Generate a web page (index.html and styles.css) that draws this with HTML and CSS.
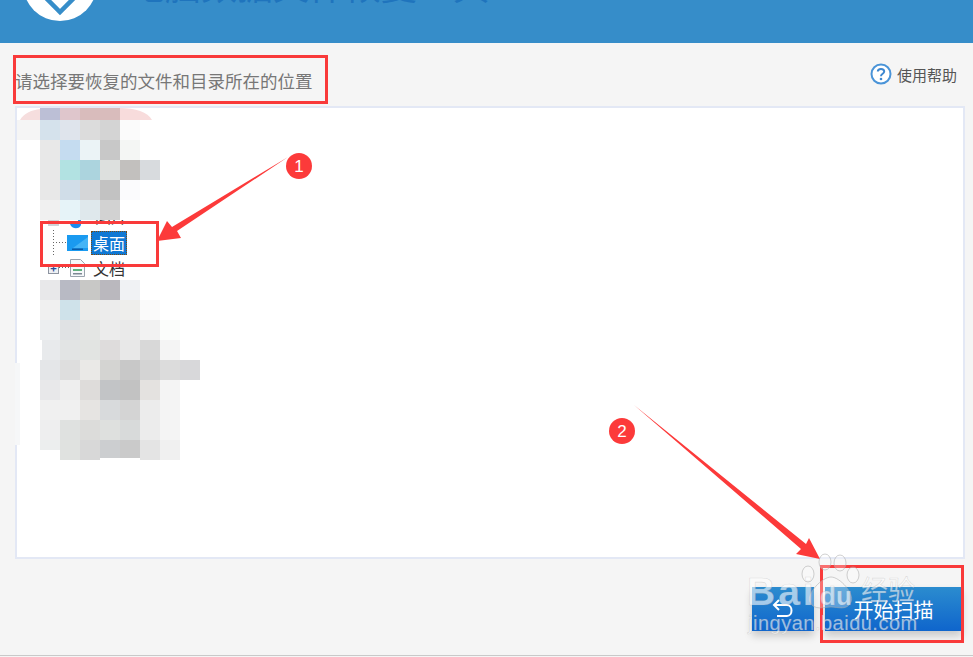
FILE: index.html

```html
<!DOCTYPE html>
<html lang="zh-CN">
<head>
  <meta charset="UTF-8" />
  <meta name="viewport" content="width=device-width, initial-scale=1.0"/>
  <title>文件恢复工具</title>
  <link rel="stylesheet" href="styles.css">
</head>
<body>

  <div class="page">
    <header class="header">
      <div class="logo">
        <svg width="74" height="74" viewBox="0 0 74 74">
          <circle cx="37" cy="37" r="37" fill="#fff"/>
          <path d="M22 50 L37 65 L52 50" fill="none" stroke="#368dc9" stroke-width="4.5"/>
        </svg>
      </div>
      <div class="title">电脑数据文件恢复工具</div>
    </header>

    <div class="top-row">
      <div class="hint">请选择要恢复的文件和目录所在的位置</div>
      <div class="help">
        <svg width="22" height="22" viewBox="0 0 22 22">
          <circle cx="11" cy="11" r="9.5" fill="#fff" stroke="#4a94d8" stroke-width="2"/>
          <path d="M7.8 8.6 C7.8 5.2 14.2 5.2 14.2 8.6 C14.2 10.8 11 10.8 11 13.2" fill="none" stroke="#3d87d0" stroke-width="2"/>
          <circle cx="11" cy="16" r="1.3" fill="#3d87d0"/>
        </svg>
        <span>使用帮助</span>
      </div>
    </div>

    <div class="panel">
      <svg class="mosaic" width="150" height="112" viewBox="17 108 150 112">
        <path d="M20 120 C24 113 32 110 40 109 V120 Z" fill="#f6dede"/>
        <rect x="40" y="108" width="20" height="12" fill="#bcbfd6"/>
        <rect x="60" y="108" width="20" height="12" fill="#dfc6cc"/>
        <rect x="80" y="108" width="40" height="12" fill="#d9bcbc"/>
        <path d="M120 108 C135 108 148 112 152 120 H120 Z" fill="#f8dcdc"/>
        <rect x="17" y="120" width="23" height="20" fill="#f5f5f5"/>
        <rect x="40" y="120" width="20" height="20" fill="#d5e2ec"/>
        <rect x="60" y="120" width="20" height="20" fill="#dfe4ec"/>
        <rect x="80" y="120" width="20" height="20" fill="#dcdcdc"/>
        <rect x="100" y="120" width="20" height="20" fill="#d4d4d4"/>
        <rect x="120" y="120" width="20" height="20" fill="#fbfbfb"/>
        <rect x="40" y="140" width="20" height="20" fill="#e8e8e8"/>
        <rect x="60" y="140" width="20" height="20" fill="#c5dcf0"/>
        <rect x="80" y="140" width="20" height="20" fill="#ebf3f6"/>
        <rect x="100" y="140" width="20" height="20" fill="#c8c8c8"/>
        <rect x="120" y="140" width="20" height="20" fill="#f4f6f4"/>
        <rect x="40" y="160" width="20" height="20" fill="#e8e8e8"/>
        <rect x="60" y="160" width="20" height="20" fill="#b2e2e2"/>
        <rect x="80" y="160" width="20" height="20" fill="#acd4de"/>
        <rect x="100" y="160" width="20" height="20" fill="#dde0de"/>
        <rect x="120" y="160" width="20" height="20" fill="#c2c0be"/>
        <rect x="140" y="160" width="20" height="20" fill="#d8dbde"/>
        <rect x="40" y="180" width="20" height="20" fill="#e8e8e8"/>
        <rect x="60" y="180" width="20" height="20" fill="#d0dde8"/>
        <rect x="80" y="180" width="20" height="20" fill="#d4d6d8"/>
        <rect x="100" y="180" width="20" height="20" fill="#c2c2c2"/>
        <rect x="120" y="180" width="20" height="20" fill="#fbfbfd"/>
        <rect x="40" y="200" width="20" height="20" fill="#f0f0f0"/>
        <rect x="60" y="200" width="20" height="20" fill="#e6f3f8"/>
        <rect x="80" y="200" width="20" height="20" fill="#dfe8ec"/>
        <rect x="100" y="200" width="20" height="20" fill="#d2d2d2"/>
      </svg>

      <div class="tree-row tree-row-cut">
        <span class="node-box"></span>
        <svg class="cut-icon" width="14" height="9" viewBox="0 0 14 9">
          <path d="M1 4 C2 1 5 2 6 3 L9 2 L9 0 L12 0 L12 5 C11 9 3 10 1 4 Z" fill="#1d8cf0"/>
        </svg>
        <span class="tree-label">图片</span>
      </div>
      <div class="tree-row tree-row-on">
        <span class="twig"></span>
        <svg class="monitor" width="21" height="16" viewBox="0 0 21 16">
          <rect width="21" height="16" fill="#1a9af0"/>
          <path d="M21 2 L21 13 L6 13 Z" fill="#45b4f6"/>
          <rect x="5" y="13.5" width="11" height="1.5" fill="#0b5aa8"/>
        </svg>
        <span class="tree-label selected">桌面</span>
      </div>
      <div class="tree-row tree-row-doc">
        <span class="plus-box">+</span>
        <span class="dots"></span>
        <svg class="doc" width="15" height="18" viewBox="0 0 15 18">
          <path d="M.5 .5 H10.5 L14.5 4.5 V17.5 H.5 Z" fill="#f6f8fa" stroke="#9aa3ad"/>
          <rect x="3" y="6" width="9" height="2" fill="#52a0d8"/>
          <rect x="3" y="10" width="9" height="2" fill="#5fb07c"/>
          <rect x="3" y="14" width="9" height="1.5" fill="#7d8894"/>
        </svg>
        <span class="tree-label">文档</span>
      </div>

      <svg class="mosaic" width="190" height="180" viewBox="17 280 190 180">
        <rect x="40" y="280" width="20" height="20" fill="#e8e8ea"/>
        <rect x="60" y="280" width="20" height="20" fill="#b8bac4"/>
        <rect x="80" y="280" width="20" height="20" fill="#c8c8c6"/>
        <rect x="100" y="280" width="20" height="20" fill="#bab8be"/>
        <rect x="120" y="280" width="20" height="20" fill="#f0f2f4"/>
        <rect x="40" y="300" width="20" height="20" fill="#f0f0f0"/>
        <rect x="60" y="300" width="20" height="20" fill="#cfe2ea"/>
        <rect x="80" y="300" width="20" height="20" fill="#ebebe9"/>
        <rect x="100" y="300" width="20" height="20" fill="#ececec"/>
        <rect x="120" y="300" width="20" height="20" fill="#eeeeec"/>
        <rect x="140" y="300" width="20" height="20" fill="#fafafa"/>
        <rect x="40" y="320" width="20" height="20" fill="#eceef0"/>
        <rect x="60" y="320" width="20" height="20" fill="#e0e2e4"/>
        <rect x="80" y="320" width="20" height="20" fill="#e4e6e4"/>
        <rect x="100" y="320" width="20" height="20" fill="#ececec"/>
        <rect x="120" y="320" width="20" height="20" fill="#eaeaea"/>
        <rect x="140" y="320" width="20" height="20" fill="#f2f2f2"/>
        <rect x="160" y="320" width="20" height="20" fill="#fbfdfb"/>
        <rect x="42" y="340" width="18" height="20" fill="#e8eaec"/>
        <rect x="60" y="340" width="20" height="20" fill="#e2e4e4"/>
        <rect x="80" y="340" width="20" height="20" fill="#e2e4e2"/>
        <rect x="100" y="340" width="20" height="20" fill="#dedcdc"/>
        <rect x="120" y="340" width="20" height="20" fill="#e8e8e8"/>
        <rect x="140" y="340" width="20" height="20" fill="#d8d8d8"/>
        <rect x="160" y="340" width="20" height="20" fill="#f4f4f4"/>
        <rect x="40" y="360" width="20" height="20" fill="#e4e6e8"/>
        <rect x="60" y="360" width="20" height="20" fill="#dedede"/>
        <rect x="80" y="360" width="20" height="20" fill="#eae9e7"/>
        <rect x="100" y="360" width="20" height="20" fill="#d4d4d2"/>
        <rect x="120" y="360" width="20" height="20" fill="#c8c8c8"/>
        <rect x="140" y="360" width="20" height="20" fill="#d4d4d4"/>
        <rect x="160" y="360" width="20" height="20" fill="#dcdcdc"/>
        <rect x="180" y="360" width="20" height="20" fill="#d8d8da"/>
        <rect x="40" y="380" width="20" height="20" fill="#e8e8ea"/>
        <rect x="60" y="380" width="20" height="20" fill="#eeeeee"/>
        <rect x="80" y="380" width="20" height="20" fill="#dedcda"/>
        <rect x="100" y="380" width="20" height="20" fill="#c2c4c6"/>
        <rect x="120" y="380" width="20" height="20" fill="#c2c2c2"/>
        <rect x="140" y="380" width="20" height="20" fill="#e4e2e0"/>
        <rect x="160" y="380" width="20" height="20" fill="#f4f4f4"/>
        <rect x="40" y="400" width="20" height="20" fill="#f0f0f0"/>
        <rect x="60" y="400" width="20" height="20" fill="#f0f0f0"/>
        <rect x="80" y="400" width="20" height="20" fill="#e6e4e2"/>
        <rect x="100" y="400" width="20" height="20" fill="#d8dadc"/>
        <rect x="120" y="400" width="20" height="20" fill="#d4d4d4"/>
        <rect x="140" y="400" width="20" height="20" fill="#ececec"/>
        <rect x="160" y="400" width="20" height="20" fill="#f4f4f4"/>
        <rect x="40" y="420" width="20" height="20" fill="#eeeeef"/>
        <rect x="60" y="420" width="20" height="20" fill="#dfe1e0"/>
        <rect x="80" y="420" width="20" height="20" fill="#dcdcda"/>
        <rect x="100" y="420" width="20" height="20" fill="#dee0de"/>
        <rect x="120" y="420" width="20" height="20" fill="#d8dada"/>
        <rect x="140" y="420" width="20" height="20" fill="#ececec"/>
        <rect x="160" y="420" width="20" height="20" fill="#f4f4f4"/>
        <rect x="40" y="440" width="20" height="10" fill="#eceeee"/>
        <rect x="60" y="440" width="20" height="20" fill="#e0e2e0"/>
        <rect x="80" y="440" width="20" height="20" fill="#d8d8d8"/>
        <rect x="100" y="440" width="20" height="18" fill="#ccced0"/>
        <rect x="120" y="440" width="20" height="18" fill="#cacaca"/>
        <rect x="140" y="440" width="20" height="20" fill="#e4e4e4"/>
        <rect x="160" y="440" width="20" height="20" fill="#f0f0f0"/>
      </svg>
    </div>

    <div class="actions">
      <button class="btn btn-back">
        <svg width="24" height="22" viewBox="0 0 24 22">
          <path d="M8 2 L3 7 L8 12 M3 7 H16 C22 7 22 18 16 18 H6" fill="none" stroke="#fff" stroke-width="2"/>
        </svg>
      </button>
      <button class="btn btn-start">开始扫描</button>
    </div>
  </div>

  <!-- screenshot markup and watermark, painted on top of the window -->
  <svg class="notes" width="973" height="657" viewBox="0 0 973 657">
    <rect x="15" y="363" width="5" height="82" fill="#f6f7f8"/>

    <g fill="none" stroke="#f93a3a" stroke-width="3">
      <rect x="14.5" y="56.5" width="312" height="46"/>
      <rect x="41.5" y="222.5" width="116" height="43"/>
      <rect x="821.5" y="566.5" width="141" height="75"/>
    </g>

    <g fill="#fc3a3a">
      <path d="M288 157 L177 231 L181 238 L157 241 L167 221 L172 227 Z"/>
      <path d="M634 405 L806 544 L809 538 L820 559 L796 554 L801 549 Z"/>
      <circle cx="299" cy="166" r="13"/>
      <circle cx="622" cy="431" r="13"/>
    </g>
    <text class="num" x="299" y="172">1</text>
    <text class="num" x="622" y="437">2</text>

    <g class="paw">
      <ellipse cx="808" cy="574" rx="6" ry="8"/>
      <ellipse cx="825" cy="562" rx="6" ry="8"/>
      <ellipse cx="840" cy="563" rx="6" ry="8"/>
      <ellipse cx="853" cy="575" rx="6" ry="8"/>
      <path d="M831 577 C840 577 855 594 851 602 C847 611 838 607 831 607 C824 607 814 611 810 602 C806 594 822 577 831 577 Z"/>
    </g>
    <text class="wm wm-bai" x="747" y="605">Bai</text>
    <text class="wm wm-du" x="820" y="605">du</text>
    <text class="wm wm-cn" x="861" y="600">经验</text>
    <text class="wm wm-url" x="748" y="630">jingyan.baidu.com</text>
  </svg>

</body>
</html>
```

FILE: styles.css

```css
* { box-sizing: border-box; }
body {
  margin: 0;
  width: 973px;
  height: 657px;
  overflow: hidden;
  position: relative;
  background: #f5f5f5;
  font-family: "Noto Sans CJK SC", "Liberation Sans", sans-serif;
}
svg { display: block; }

.page { height: 656px; border-bottom: 1px solid #c9c9c9; }

.header {
  height: 43px;
  background: #368dc9;
  overflow: hidden;
  display: flex;
  align-items: flex-end;
  padding: 0 0 22px 23px;
}
.logo { flex: none; }
.title {
  margin: 0 0 17px 32px;
  font-size: 36px;
  line-height: 40px;
  color: #1f74bd;
  white-space: nowrap;
}

.top-row {
  height: 63px;
  display: flex;
  justify-content: space-between;
  padding: 0 16px 0 15px;
}
.hint {
  margin-top: 25px;
  font-size: 17.5px;
  line-height: 26px;
  color: #777;
}
.help {
  margin-top: 20px;
  height: 22px;
  display: flex;
  align-items: center;
  gap: 5px;
  font-size: 15px;
  color: #555;
}

.panel {
  margin: 0 8px 0 15px;
  height: 453px;
  background: #fff;
  border: 2px solid #e3e8f5;
  overflow: hidden;
}

.tree-row {
  display: flex;
  align-items: center;
  padding-left: 31px;
  font-size: 16px;
  color: #333;
}
.tree-label { white-space: nowrap; }

.tree-row-cut {
  height: 10px;
  overflow: hidden;
  align-items: flex-start;
}
.tree-row-cut .tree-label { margin: -16px 0 0 12px; line-height: 24px; }
.node-box {
  width: 11px;
  height: 6px;
  background: #cfd2d6;
}
.cut-icon { margin-left: 10px; }

.tree-row-on { height: 25px; }
.twig {
  width: 14px;
  height: 25px;
  margin-left: 5px;
  background:
    repeating-linear-gradient(to bottom, #666 0 1px, transparent 1px 3px) 0 0 / 1px 100% no-repeat,
    repeating-linear-gradient(to right, #666 0 1px, transparent 1px 3px) 0 12px / 100% 1px no-repeat;
}
.monitor { margin-right: 3px; }
.selected {
  width: 36px;
  height: 24px;
  line-height: 22px;
  text-align: center;
  background: #0f78d4;
  color: #fff;
  border: 1px dotted #7a4a10;
}

.tree-row-doc { height: 25px; }
.plus-box {
  width: 11px;
  height: 10px;
  margin-top: 2px;
  border: 1px solid #8d94a0;
  background: #eef0f4;
  color: #2a4a96;
  font-size: 11px;
  line-height: 7px;
  text-align: center;
  font-weight: bold;
}
.dots {
  width: 11px;
  height: 1px;
  background: repeating-linear-gradient(to right, #666 0 1px, transparent 1px 3px);
}
.doc { margin-right: 8px; }

.actions {
  display: flex;
  justify-content: flex-end;
  gap: 11px;
  padding: 28px 11px 0 0;
}
.btn {
  height: 44px;
  border: none;
  color: #fff;
  background: linear-gradient(#2b8ccf, #0f65cc);
  box-shadow: 0 5px 8px rgba(0, 0, 0, .18);
  font-family: inherit;
  font-size: 20px;
  padding: 0;
}
.btn-back {
  width: 62px;
  display: flex;
  align-items: center;
  justify-content: center;
}
.btn-start { width: 137px; }

.notes { position: absolute; left: 0; top: 0; }
.num {
  fill: #fff;
  font-family: "Liberation Sans", sans-serif;
  font-size: 17px;
  text-anchor: middle;
}
.paw ellipse, .paw path {
  fill: rgba(255, 255, 255, .28);
  stroke: rgba(170, 170, 170, .55);
  stroke-width: 1;
}
.wm {
  fill: rgba(255, 255, 255, .6);
  stroke: rgba(150, 150, 150, .3);
  stroke-width: .6;
}
.wm-bai { font: bold 39px "Liberation Sans", sans-serif; letter-spacing: 3px; }
.wm-du { font: bold 26px "Liberation Sans", sans-serif; }
.wm-cn { font: 27px "Noto Sans CJK SC", sans-serif; }
.wm-url { font: 20px "Liberation Sans", sans-serif; letter-spacing: .5px; }
```
